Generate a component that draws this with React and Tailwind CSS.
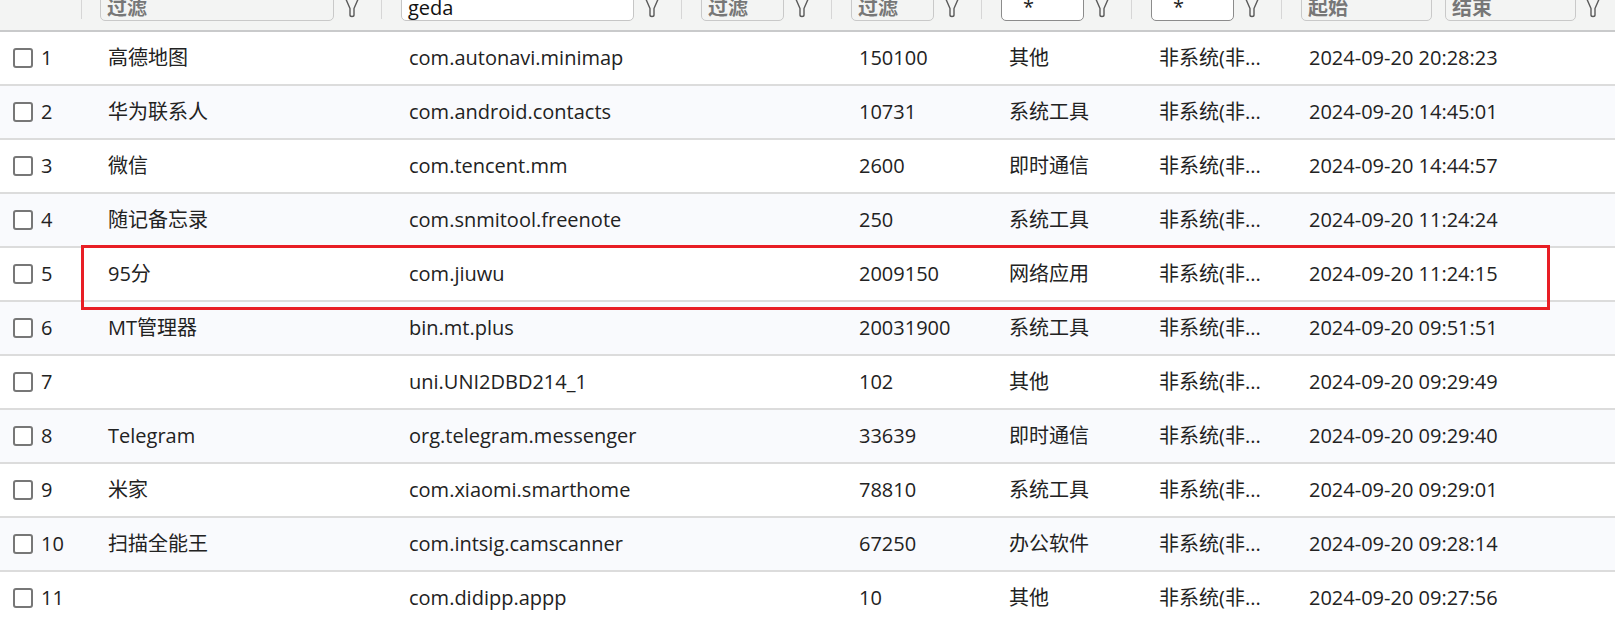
import React from "react";

const rows = [
  ["1", "高德地图", "com.autonavi.minimap", "150100", "其他", "2024-09-20 20:28:23"],
  ["2", "华为联系人", "com.android.contacts", "10731", "系统工具", "2024-09-20 14:45:01"],
  ["3", "微信", "com.tencent.mm", "2600", "即时通信", "2024-09-20 14:44:57"],
  ["4", "随记备忘录", "com.snmitool.freenote", "250", "系统工具", "2024-09-20 11:24:24"],
  ["5", "95分", "com.jiuwu", "2009150", "网络应用", "2024-09-20 11:24:15"],
  ["6", "MT管理器", "bin.mt.plus", "20031900", "系统工具", "2024-09-20 09:51:51"],
  ["7", "", "uni.UNI2DBD214_1", "102", "其他", "2024-09-20 09:29:49"],
  ["8", "Telegram", "org.telegram.messenger", "33639", "即时通信", "2024-09-20 09:29:40"],
  ["9", "米家", "com.xiaomi.smarthome", "78810", "系统工具", "2024-09-20 09:29:01"],
  ["10", "扫描全能王", "com.intsig.camscanner", "67250", "办公软件", "2024-09-20 09:28:14"],
  ["11", "", "com.didipp.appp", "10", "其他", "2024-09-20 09:27:56"],
];

const cols = "grid grid-cols-[82px_300px_300px_150px_150px_150px_150px_1fr]";

const Funnel = () => (
  <svg width="16" height="22" viewBox="0 0 16 22" className="-mt-[4px]">
    <path
      d="M1 1 H15 L10 12.5 V19 Q10 20.5 8 20.5 Q6 20.5 6 19 V12.5 Z"
      fill="none"
      stroke="#5a5a5a"
      strokeWidth="1.4"
      strokeLinejoin="round"
    />
  </svg>
);

const Divider = () => <div className="w-px h-[19px] bg-[#d6d6d6]" />;

const FilterBox = ({ text, kind }) => {
  if (kind === "star")
    return (
      <div className="flex-1 h-[32px] -mt-[11px] border-[1.5px] border-[#8c8c8c] rounded-b-[5px] bg-white flex items-end pl-[21px] pb-[2px] text-[20px] leading-[22px] text-[#222]">
        {text}
      </div>
    );
  if (kind === "value")
    return (
      <div className="flex-1 h-[32px] -mt-[11px] border-[1.5px] border-[#c6c6c6] rounded-b-[5px] bg-white flex items-end pl-[6px] pb-[1px] text-[20px] leading-[22px] text-[#111]">
        {text}
      </div>
    );
  return (
    <div className="flex-1 h-[32px] -mt-[11px] border-[1.5px] border-[#c9c9c9] rounded-b-[5px] bg-[#f3f4f3] flex items-end pl-[6px] pb-[1px] text-[20px] leading-[22px] font-bold text-[#777]">
      {text}
    </div>
  );
};

const HeadCell = ({ children, pl = "pl-[19px]", last }) => (
  <div className={`flex items-start h-full ${pl}`}>
    {children}
    <div className={`${last ? "w-[39px] pl-[9px]" : "w-[47px] pl-[10px]"} flex`}>
      <Funnel />
    </div>
    {!last && <Divider />}
  </div>
);

export default function App() {
  return (
    <div className="relative w-[1615px] h-[623px] overflow-hidden bg-white font-['Open_Sans','Noto_Sans_CJK_SC',sans-serif] text-[#222]">
      <div className={`${cols} h-[32px] bg-[#f3f4f3] border-b-2 border-[#c9cacb]`}>
        <div className="flex justify-end items-start h-full">
          <Divider />
        </div>
        <HeadCell pl="pl-[18px]">
          <FilterBox text="过滤" />
        </HeadCell>
        <HeadCell>
          <FilterBox text="geda" kind="value" />
        </HeadCell>
        <HeadCell>
          <FilterBox text="过滤" />
        </HeadCell>
        <HeadCell>
          <FilterBox text="过滤" />
        </HeadCell>
        <HeadCell>
          <FilterBox text="*" kind="star" />
        </HeadCell>
        <HeadCell>
          <FilterBox text="*" kind="star" />
        </HeadCell>
        <HeadCell last>
          <div className="flex-1 flex gap-[13px]">
            <FilterBox text="起始" />
            <FilterBox text="结束" />
          </div>
        </HeadCell>
      </div>

      {rows.map((r, i) => (
        <div
          key={r[0]}
          className={`${cols} h-[54px] items-center border-b-2 border-[#dcdcdc] text-[20px] ${
            i % 2 === 1 ? "bg-[#f9fafd]" : "bg-white"
          }`}
        >
          <div className="flex items-center gap-[8px] pl-[13px]">
            <div className="w-[20px] h-[20px] border-2 border-[#777] rounded-[3px] bg-white" />
            <span>{r[0]}</span>
          </div>
          <div className="pl-[26px] truncate">{r[1]}</div>
          <div className="pl-[27px] truncate">{r[2]}</div>
          <div />
          <div className="pl-[27px]">{r[3]}</div>
          <div className="pl-[27px]">{r[4]}</div>
          <div className="pl-[27px] whitespace-nowrap">非系统(非...</div>
          <div className="pl-[27px]">{r[5]}</div>
        </div>
      ))}

      <div className="absolute left-[81px] top-[245px] w-[1469px] h-[65px] border-[3px] border-[#e81e25]" />
    </div>
  );
}
